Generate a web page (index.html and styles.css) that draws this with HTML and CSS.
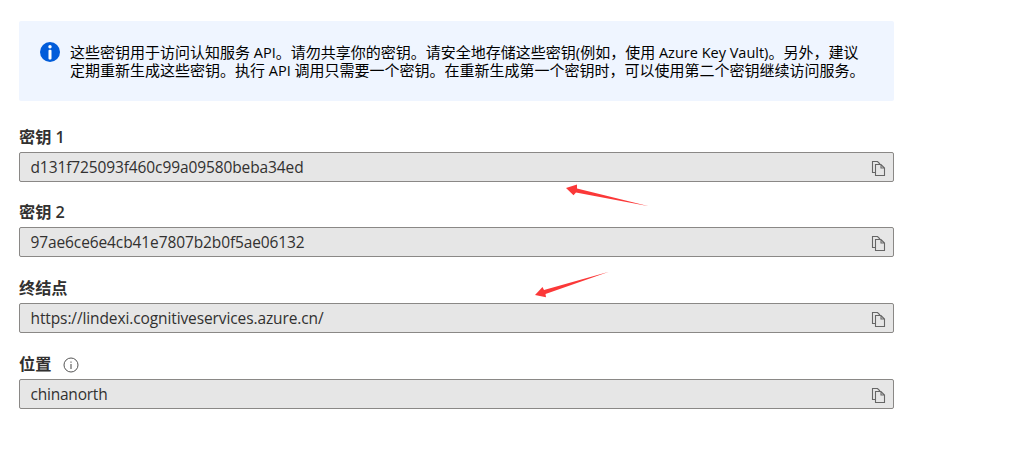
FILE: index.html
```html
<!DOCTYPE html>
<html lang="zh-CN">
<head>
<meta charset="utf-8">
<title>密钥和终结点</title>
<link rel="stylesheet" href="styles.css">
</head>
<body>
<svg class="symbols" width="0" height="0">
  <symbol id="copy" viewBox="0 0 15 17">
    <path d="M4.500 12.500H1.500V1.500H6.500L9 4M4.500 4.500H10L13.500 8V15.500H4.500ZM10 4.500V8H13.500" fill="none" stroke="#666" stroke-width="1.100"/>
  </symbol>
</svg>
<main class="page">
  <section class="notice">
    <svg class="notice-icon" viewBox="0 0 20 20"><circle cx="10" cy="10" r="10" fill="#015cda"/><circle cx="10" cy="4.800" r="1.700" fill="#fff"/><rect x="8.500" y="7.700" width="3" height="9.800" rx="1" fill="#fff"/></svg>
    <p class="notice-text">这些密钥用于访问认知服务<span class="latin"> API</span>。请勿共享你的密钥。请安全地存储这些密钥(例如，使用<span class="latin"> Azure Key Vault)</span>。另外，建议<br>定期重新生成这些密钥。执行<span class="latin"> API </span>调用只需要一个密钥。在重新生成第一个密钥时，可以使用第二个密钥继续访问服务。</p>
  </section>
  <section class="field first">
    <h2 class="label">密钥 1</h2>
    <div class="box"><span class="value">d131f725093f460c99a09580beba34ed</span><svg class="copy"><use href="#copy"/></svg></div>
  </section>
  <section class="field">
    <h2 class="label">密钥 2</h2>
    <div class="box"><span class="value">97ae6ce6e4cb41e7807b2b0f5ae06132</span><svg class="copy"><use href="#copy"/></svg></div>
  </section>
  <section class="field">
    <h2 class="label">终结点</h2>
    <div class="box"><span class="value">https://lindexi.cognitiveservices.azure.cn/</span><svg class="copy"><use href="#copy"/></svg></div>
  </section>
  <section class="field">
    <h2 class="label">位置<svg class="hint" viewBox="0 0 16 16"><circle cx="8" cy="8" r="7" fill="none" stroke="#555"/><path d="M8 7V12M8 4.500V5.700" stroke="#555" stroke-width="1.100"/></svg></h2>
    <div class="box"><span class="value place">chinanorth</span><svg class="copy"><use href="#copy"/></svg></div>
  </section>
</main>
<svg class="arrows" viewBox="0 0 1011 473">
  <path d="M566 188L577 184.500V188.400L649 206.200L576 192.500L573.500 195.300Z" fill="#fb3838"/>
  <path d="M535 295L542.500 287L544 290L609 271.800L545.500 294L546 297.300Z" fill="#fb3838"/>
</svg>
</body>
</html>
```
FILE: styles.css
```css
* { box-sizing: border-box; }
body {
  margin: 0;
  background: #fff;
  color: #323130;
  font-family: "Open Sans", "Noto Sans CJK SC", sans-serif;
}
.symbols { display: none; }
.page { width: 894px; padding: 21px 0 0 19px; }
.notice {
  display: flex;
  height: 80px;
  padding: 21px 0 0 21px;
  border-radius: 2px;
  background: #eff5ff;
}
.notice-icon { flex: none; width: 20px; height: 20px; }
.notice-text {
  margin: 2px 0 0 10px;
  color: #000;
  font-size: 15px;
  line-height: 17.5px;
  white-space: nowrap;
}
.latin { font-size: 14.5px; }
.field { height: 76px; }
.first { margin-top: 26px; height: 75px; }
.label {
  display: flex;
  align-items: center;
  height: 21px;
  margin: 0 0 4px;
  font-size: 16.2px;
  font-weight: 600;
  line-height: 21px;
}
.box {
  display: flex;
  align-items: center;
  justify-content: space-between;
  height: 30px;
  padding: 0 7px 0 10px;
  border: 1px solid #8a8886;
  border-radius: 2px;
  background: #e6e6e6;
}
.value {
  padding: 0 0 1px 0.5px;
  font-size: 15.5px;
  line-height: 26px;
  letter-spacing: -0.11px;
}
.place { letter-spacing: -0.22px; }
.copy { width: 15px; height: 17px; margin-top: 3px; }
.hint { width: 16px; height: 16px; margin: 1px 0 0 11.5px; }
.arrows {
  position: absolute;
  left: 0;
  top: 0;
  width: 1011px;
  height: 473px;
  pointer-events: none;
}
```
